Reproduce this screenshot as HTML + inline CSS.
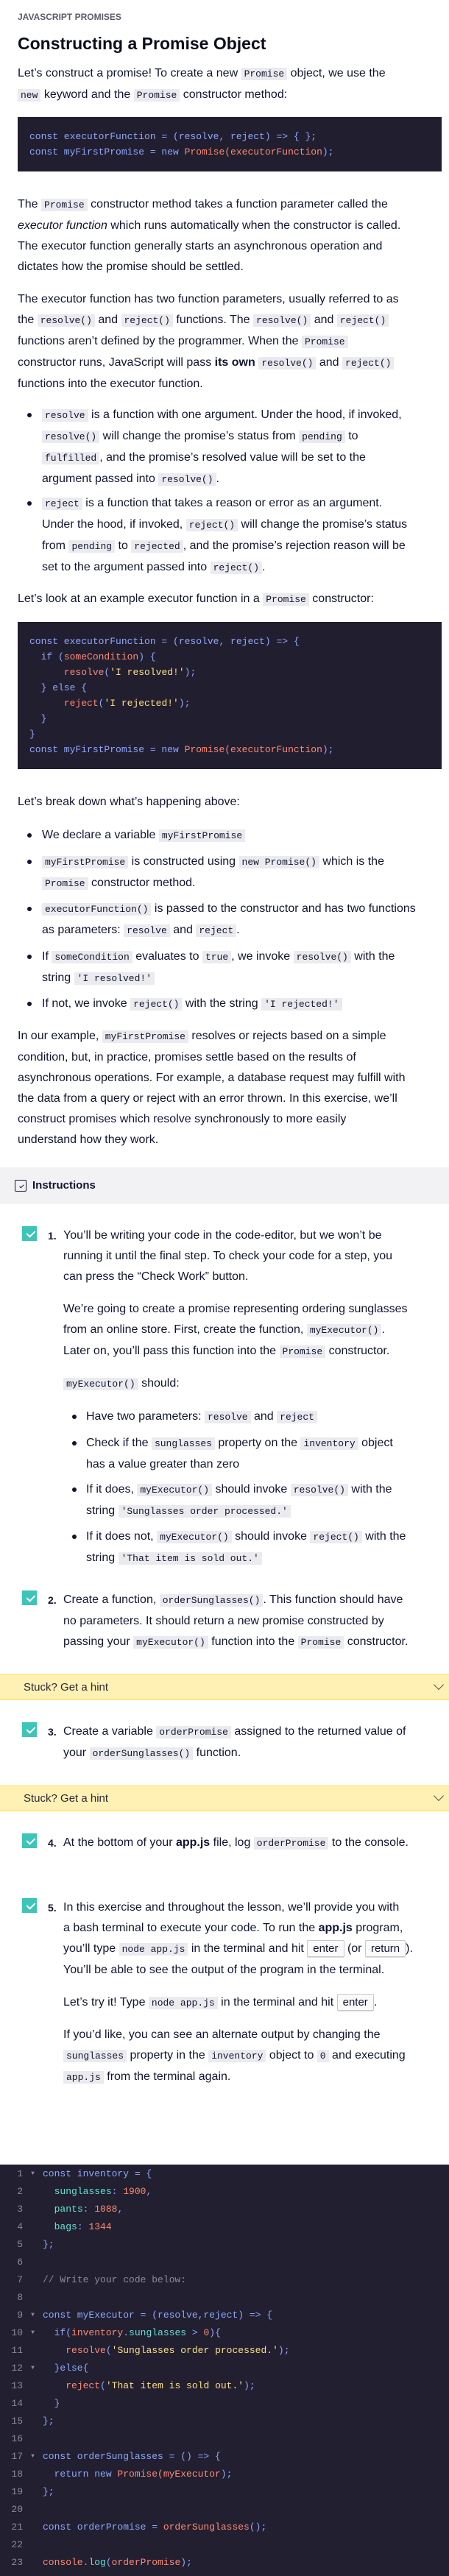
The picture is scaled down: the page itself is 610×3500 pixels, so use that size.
<!DOCTYPE html>
<html><head><meta charset="utf-8"><style>
*{margin:0;padding:0;box-sizing:border-box}
body{width:610px;height:3500px;background:#fff;position:relative;overflow:hidden;font-family:"Liberation Sans",sans-serif;font-size:16px;color:#10162f}
.b{position:absolute;left:24px;white-space:nowrap;line-height:28px}
code{font-family:"Liberation Mono",monospace;font-size:13px;background:#ebebef;padding:1px 4px;color:#10162f}
.cb{position:absolute;left:24px;width:576px;background:#211e2f;font-family:"Liberation Mono",monospace;font-size:13px;line-height:21px;padding:16px 16px;color:#8fa7ff;white-space:pre}
.r{color:#ff8973}.y{color:#ffe083}.w{color:#fff}.t{color:#63e2d3}.c{color:#8b8b9b}
.dot{position:absolute;width:6px;height:6px;border-radius:50%;background:#10162f}
.chk{position:absolute;left:30px;width:20px;height:20px;background:#3cc5b8}
.chk::after{content:"";position:absolute;left:5px;top:3px;width:9px;height:5px;border-left:2px solid #fff;border-bottom:2px solid #fff;transform:rotate(-45deg) translate(-1px,3px)}
.num{position:absolute;left:65px;font-weight:bold;font-size:14px;line-height:28px}
.hint{position:absolute;left:0;width:610px;height:35px;background:#fff0b3;border-top:1px solid #ffdd45;border-bottom:1px solid #ffdd45;font-size:15px;line-height:33px;padding-left:32px;color:#2a2a3a}
.hint::after{content:"";position:absolute;right:9px;top:8px;width:9px;height:9px;border-right:1.5px solid #555;border-bottom:1.5px solid #555;transform:rotate(45deg)}
kbd{font-family:"Liberation Sans",sans-serif;font-size:15px;border:1px solid #c8c8cc;border-radius:2px;background:#fafafa;padding:2px 7px;box-shadow:0 1px 0 #ddd}
.ed{position:absolute;left:0;top:2941px;width:610px;height:559px;background:#211f30;font-family:"Liberation Mono",monospace;font-size:13px;line-height:24px;padding-top:1px;color:#8fa7ff}
.ln{display:block;height:24px;white-space:pre}
.n{display:inline-block;width:31px;text-align:right;color:#8a8a98}
.f{display:inline-block;width:27px;text-align:center;color:#8a8a98;font-size:8px;vertical-align:top}
</style></head><body>

<div class="b" style="top:16px;font-size:12px;font-weight:bold;color:#5a5b68;line-height:14px">JAVASCRIPT PROMISES</div>
<div class="b" style="top:41px;font-size:23px;font-weight:bold;line-height:36px;color:#0a0d1c">Constructing a Promise Object</div>

<div class="b" style="top:86px">Let’s construct a promise! To create a new <code>Promise</code> object, we use the<br><code>new</code> keyword and the <code>Promise</code> constructor method:</div>

<div class="cb" style="top:159px;height:74px">const executorFunction = (resolve, reject) =&gt; { };
const myFirstPromise = new <span class="r">Promise(executorFunction</span>);</div>

<div class="b" style="top:264px">The <code>Promise</code> constructor method takes a function parameter called the<br><i>executor function</i> which runs automatically when the constructor is called.<br>The executor function generally starts an asynchronous operation and<br>dictates how the promise should be settled.</div>

<div class="b" style="top:393px">The executor function has two function parameters, usually referred to as<br>the <code>resolve()</code> and <code>reject()</code> functions. The <code>resolve()</code> and <code>reject()</code><br>functions aren’t defined by the programmer. When the <code>Promise</code><br>constructor runs, JavaScript will pass <b>its own</b> <code>resolve()</code> and <code>reject()</code><br>functions into the executor function.</div>

<div class="dot" style="left:37px;top:561px"></div>
<div class="b" style="left:57px;top:550px"><code>resolve</code> is a function with one argument. Under the hood, if invoked,<br><code>resolve()</code> will change the promise’s status from <code>pending</code> to<br><code>fulfilled</code>, and the promise’s resolved value will be set to the<br>argument passed into <code>resolve()</code>.</div>
<div class="dot" style="left:37px;top:681px"></div>
<div class="b" style="left:57px;top:670px"><code>reject</code> is a function that takes a reason or error as an argument.<br>Under the hood, if invoked, <code>reject()</code> will change the promise’s status<br>from <code>pending</code> to <code>rejected</code>, and the promise’s rejection reason will be<br>set to the argument passed into <code>reject()</code>.</div>

<div class="b" style="top:800px">Let’s look at an example executor function in a <code>Promise</code> constructor:</div>

<div class="cb" style="top:845px;height:200px">const executorFunction = (resolve, reject) =&gt; {
  if (<span class="r">someCondition</span>) {
      <span class="r">resolve</span>(<span class="y">'I resolved!'</span>);
  } else {
      <span class="r">reject</span>(<span class="y">'I rejected!'</span>);
  }
}
const myFirstPromise = new <span class="r">Promise(executorFunction</span>);</div>

<div class="b" style="top:1076px">Let’s break down what’s happening above:</div>

<div class="dot" style="left:37px;top:1132px"></div>
<div class="b" style="left:57px;top:1121px">We declare a variable <code>myFirstPromise</code></div>
<div class="dot" style="left:37px;top:1168px"></div>
<div class="b" style="left:57px;top:1157px"><code>myFirstPromise</code> is constructed using <code>new Promise()</code> which is the<br><code>Promise</code> constructor method.</div>
<div class="dot" style="left:37px;top:1232px"></div>
<div class="b" style="left:57px;top:1221px"><code>executorFunction()</code> is passed to the constructor and has two functions<br>as parameters: <code>resolve</code> and <code>reject</code>.</div>
<div class="dot" style="left:37px;top:1297px"></div>
<div class="b" style="left:57px;top:1286px">If <code>someCondition</code> evaluates to <code>true</code>, we invoke <code>resolve()</code> with the<br>string <code>'I resolved!'</code></div>
<div class="dot" style="left:37px;top:1361px"></div>
<div class="b" style="left:57px;top:1350px">If not, we invoke <code>reject()</code> with the string <code>'I rejected!'</code></div>

<div class="b" style="top:1394px">In our example, <code>myFirstPromise</code> resolves or rejects based on a simple<br>condition, but, in practice, promises settle based on the results of<br>asynchronous operations. For example, a database request may fulfill with<br>the data from a query or reject with an error thrown. In this exercise, we’ll<br>construct promises which resolve synchronously to more easily<br>understand how they work.</div>

<div style="position:absolute;left:0;top:1586px;width:610px;height:50px;background:#f2f2f4"></div>
<div style="position:absolute;left:20px;top:1603px;width:16px;height:16px;border:1.5px solid #10162f;border-radius:2px"></div>
<div style="position:absolute;left:25px;top:1607px;width:6px;height:3px;border-left:1px solid #10162f;border-bottom:1px solid #10162f;transform:rotate(-45deg) translate(-1px,3px)"></div>
<div class="b" style="left:44px;top:1597px;font-weight:bold;font-size:15px">Instructions</div>

<div class="chk" style="top:1666px"></div>
<div class="num" style="top:1665px">1.</div>
<div class="b" style="left:86px;top:1665px">You’ll be writing your code in the code-editor, but we won’t be<br>running it until the final step. To check your code for a step, you<br>can press the “Check Work” button.</div>
<div class="b" style="left:86px;top:1765px">We’re going to create a promise representing ordering sunglasses<br>from an online store. First, create the function, <code>myExecutor()</code>.<br>Later on, you’ll pass this function into the <code>Promise</code> constructor.</div>
<div class="b" style="left:86px;top:1866px"><code>myExecutor()</code> should:</div>
<div class="dot" style="left:98px;top:1922px"></div>
<div class="b" style="left:117px;top:1911px">Have two parameters: <code>resolve</code> and <code>reject</code></div>
<div class="dot" style="left:98px;top:1958px"></div>
<div class="b" style="left:117px;top:1947px">Check if the <code>sunglasses</code> property on the <code>inventory</code> object<br>has a value greater than zero</div>
<div class="dot" style="left:98px;top:2021px"></div>
<div class="b" style="left:117px;top:2010px">If it does, <code>myExecutor()</code> should invoke <code>resolve()</code> with the<br>string <code>'Sunglasses order processed.'</code></div>
<div class="dot" style="left:98px;top:2085px"></div>
<div class="b" style="left:117px;top:2074px">If it does not, <code>myExecutor()</code> should invoke <code>reject()</code> with the<br>string <code>'That item is sold out.'</code></div>

<div class="chk" style="top:2161px"></div>
<div class="num" style="top:2160px">2.</div>
<div class="b" style="left:86px;top:2160px">Create a function, <code>orderSunglasses()</code>. This function should have<br>no parameters. It should return a new promise constructed by<br>passing your <code>myExecutor()</code> function into the <code>Promise</code> constructor.</div>

<div class="hint" style="top:2275px">Stuck? Get a hint</div>

<div class="chk" style="top:2340px"></div>
<div class="num" style="top:2339px">3.</div>
<div class="b" style="left:86px;top:2339px">Create a variable <code>orderPromise</code> assigned to the returned value of<br>your <code>orderSunglasses()</code> function.</div>

<div class="hint" style="top:2426px">Stuck? Get a hint</div>

<div class="chk" style="top:2491px"></div>
<div class="num" style="top:2490px">4.</div>
<div class="b" style="left:86px;top:2490px">At the bottom of your <b>app.js</b> file, log <code>orderPromise</code> to the console.</div>

<div class="chk" style="top:2579px"></div>
<div class="num" style="top:2578px">5.</div>
<div class="b" style="left:86px;top:2578px">In this exercise and throughout the lesson, we’ll provide you with<br>a bash terminal to execute your code. To run the <b>app.js</b> program,<br>you’ll type <code>node app.js</code> in the terminal and hit <kbd>enter</kbd> (or <kbd>return</kbd>).<br>You’ll be able to see the output of the program in the terminal.</div>
<div class="b" style="left:86px;top:2707px">Let’s try it! Type <code>node app.js</code> in the terminal and hit <kbd>enter</kbd>.</div>
<div class="b" style="left:86px;top:2751px">If you’d like, you can see an alternate output by changing the<br><code>sunglasses</code> property in the <code>inventory</code> object to <code>0</code> and executing<br><code>app.js</code> from the terminal again.</div>

<div class="ed">
<div class="ln"><span class="n">1</span><span class="f">▼</span>const inventory = {</div>
<div class="ln"><span class="n">2</span><span class="f"> </span>  <span class="t">sunglasses</span>: <span class="r">1900</span>,</div>
<div class="ln"><span class="n">3</span><span class="f"> </span>  <span class="t">pants</span>: <span class="r">1088</span>,</div>
<div class="ln"><span class="n">4</span><span class="f"> </span>  <span class="t">bags</span>: <span class="r">1344</span></div>
<div class="ln"><span class="n">5</span><span class="f"> </span>};</div>
<div class="ln"><span class="n">6</span><span class="f"> </span></div>
<div class="ln"><span class="n">7</span><span class="f"> </span><span class="c">// Write your code below:</span></div>
<div class="ln"><span class="n">8</span><span class="f"> </span></div>
<div class="ln"><span class="n">9</span><span class="f">▼</span>const myExecutor = (resolve,reject) =&gt; {</div>
<div class="ln"><span class="n">10</span><span class="f">▼</span>  if(<span class="r">inventory</span>.<span class="t">sunglasses</span> &gt; <span class="r">0</span>){</div>
<div class="ln"><span class="n">11</span><span class="f"> </span>    <span class="r">resolve</span>(<span class="y">'Sunglasses order processed.'</span>);</div>
<div class="ln"><span class="n">12</span><span class="f">▼</span>  }else{</div>
<div class="ln"><span class="n">13</span><span class="f"> </span>    <span class="r">reject</span>(<span class="y">'That item is sold out.'</span>);</div>
<div class="ln"><span class="n">14</span><span class="f"> </span>  }</div>
<div class="ln"><span class="n">15</span><span class="f"> </span>};</div>
<div class="ln"><span class="n">16</span><span class="f"> </span></div>
<div class="ln"><span class="n">17</span><span class="f">▼</span>const orderSunglasses = () =&gt; {</div>
<div class="ln"><span class="n">18</span><span class="f"> </span>  return new <span class="r">Promise(myExecutor</span>);</div>
<div class="ln"><span class="n">19</span><span class="f"> </span>};</div>
<div class="ln"><span class="n">20</span><span class="f"> </span></div>
<div class="ln"><span class="n">21</span><span class="f"> </span>const orderPromise = <span class="r">orderSunglasses</span>();</div>
<div class="ln"><span class="n">22</span><span class="f"> </span></div>
<div class="ln"><span class="n">23</span><span class="f"> </span><span class="r">console</span>.<span class="t">log</span>(<span class="r">orderPromise</span>);</div>
</div>
</body></html>
